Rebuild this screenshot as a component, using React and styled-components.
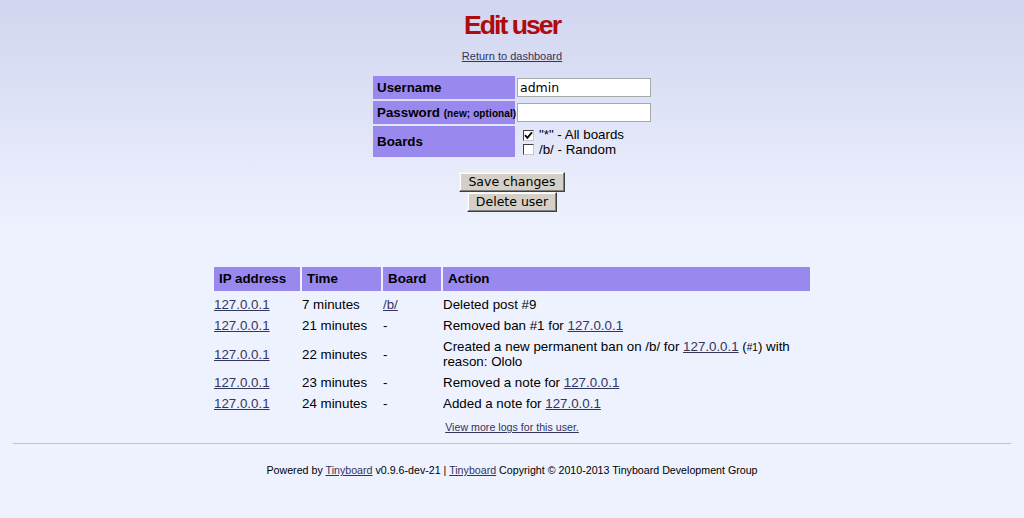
import React from "react";
import styled, { createGlobalStyle } from "styled-components";

const Global = createGlobalStyle`
  html, body { margin: 0; padding: 0; }
  body {
    background: #eef2ff linear-gradient(to bottom, #d1d5ef 0px, #eef2ff 230px) no-repeat;
    min-height: 518px;
    font-family: "Liberation Sans", Arial, sans-serif;
    font-size: 10pt;
    color: #000;
  }
`;

const Page = styled.div`
  padding: 0 13px;
`;

const Header = styled.header`
  text-align: center;
`;

const Title = styled.h1`
  margin: 10px 0 0;
  font-family: "Liberation Sans", Arial, sans-serif;
  font-size: 20pt;
  font-weight: bold;
  letter-spacing: -2px;
  color: #af0a0f;
  line-height: normal;
`;

const Subtitle = styled.p`
  margin: 9px 0 0;
  font-size: 11px;
  line-height: normal;
`;

const Link = styled.a`
  color: #34345c;
  text-decoration: underline;
  cursor: pointer;
`;

const FormTable = styled.table`
  margin: 12px auto 0;
  border-spacing: 2px;
  table-layout: fixed;
  width: 282px;
`;

const Th = styled.th`
  background: #98e;
  text-align: left;
  padding: 4px;
  white-space: nowrap;
  font-weight: bold;
  width: 134px;
  overflow: visible;
`;

const Small = styled.span`
  font-size: 10px;
  font-weight: bold;
  letter-spacing: 0.1px;
`;

const Td = styled.td`
  padding: 0;
  width: 134px;
  vertical-align: middle;
`;

const TextInput = styled.input`
  display: block;
  box-sizing: border-box;
  width: 134px;
  height: 19px;
  margin: 0;
  padding: 0 2px;
  border: 1px solid #a9a9a9;
  background: #fff;
  font-family: "DejaVu Sans", sans-serif;
  font-size: 12.5px;
  color: #000;
  outline: none;
`;

const BoardList = styled.div`
  display: flex;
  flex-direction: column;
  padding: 2px 0 0 6px;
`;

const BoardItem = styled.label`
  display: flex;
  align-items: center;
  gap: 5px;
  height: 14.5px;
  line-height: 14.5px;
  white-space: nowrap;
`;

const Box = styled.span`
  box-sizing: border-box;
  width: 11px;
  height: 11px;
  border-style: solid;
  border-width: 1px;
  border-color: #404040 #c8c8c8 #c8c8c8 #404040;
  background: #fff;
  display: flex;
  align-items: center;
  justify-content: center;
  flex: none;
`;

const Checkbox = ({ checked }) => (
  <Box>
    {checked && (
      <svg width="9" height="9" viewBox="0 0 9 9">
        <path d="M1 4.2 L3.4 6.8 L8 1.2" fill="none" stroke="#000" strokeWidth="1.8" />
      </svg>
    )}
  </Box>
);

const Buttons = styled.div`
  margin-top: 13px;
  display: flex;
  flex-direction: column;
  align-items: center;
`;

const Button = styled.button`
  box-sizing: border-box;
  height: 20px;
  margin: 0;
  padding: 0 8px;
  background: #d4d0c8;
  border-style: solid;
  border-width: 1px;
  border-color: #f4f4f4 #404040 #404040 #f4f4f4;
  box-shadow: inset -1px -1px 0 #808080, inset 1px 1px 0 #fff;
  font-family: "DejaVu Sans", sans-serif;
  font-size: 12.5px;
  line-height: 16px;
  color: #000;
`;

const LogTable = styled.table`
  margin: 53px auto 0;
  width: 600px;
  border-spacing: 2px;
  table-layout: fixed;
`;

const LogTh = styled.th`
  background: #98e;
  text-align: left;
  padding: 4px 15px 5px 5px;
  white-space: nowrap;
  font-weight: bold;
  width: ${(p) => p.$w}px;
`;

const LogTd = styled.td`
  text-align: left;
  padding: 4px 15px 0 0;
  vertical-align: middle;
  line-height: 15px;
  white-space: ${(p) => (p.$wrap ? "normal" : "nowrap")};
`;

const Tiny = styled.small`
  font-size: 10px;
  line-height: 1;
`;

const Unimportant = styled.p`
  margin: 8px 0 0;
  text-align: center;
  font-size: 8pt;
  line-height: normal;
`;

const Rule = styled.hr`
  border: none;
  border-top: 1px solid #b7c5d9;
  height: 0;
  margin: 10px 0 0;
`;

const Footer = styled.footer`
  margin-top: 20px;
  text-align: center;
  font-size: 8pt;
  line-height: normal;
`;

const logs = [
  { time: "7 minutes", board: "/b/", action: <>Deleted post #9</> },
  { time: "21 minutes", board: null, action: <>Removed ban #1 for <Link>127.0.0.1</Link></> },
  {
    time: "22 minutes",
    board: null,
    action: (
      <>
        Created a new permanent ban on /b/ for <Link>127.0.0.1</Link> (<Tiny>#1</Tiny>) with reason: Ololo
      </>
    ),
  },
  { time: "23 minutes", board: null, action: <>Removed a note for <Link>127.0.0.1</Link></> },
  { time: "24 minutes", board: null, action: <>Added a note for <Link>127.0.0.1</Link></> },
];

export default function App() {
  return (
    <Page>
      <Global />
      <Header>
        <Title>Edit user</Title>
        <Subtitle>
          <Link>Return to dashboard</Link>
        </Subtitle>
      </Header>

      <FormTable>
        <tbody>
          <tr>
            <Th>Username</Th>
            <Td>
              <TextInput defaultValue="admin" />
            </Td>
          </tr>
          <tr>
            <Th>
              Password <Small>(new; optional)</Small>
            </Th>
            <Td>
              <TextInput />
            </Td>
          </tr>
          <tr>
            <Th>Boards</Th>
            <Td>
              <BoardList>
                <BoardItem>
                  <Checkbox checked />
                  <span>"*" - All boards</span>
                </BoardItem>
                <BoardItem>
                  <Checkbox />
                  <span>/b/ - Random</span>
                </BoardItem>
              </BoardList>
            </Td>
          </tr>
        </tbody>
      </FormTable>

      <Buttons>
        <Button>Save changes</Button>
        <Button>Delete user</Button>
      </Buttons>

      <LogTable>
        <thead>
          <tr>
            <LogTh $w={66}>IP address</LogTh>
            <LogTh $w={59}>Time</LogTh>
            <LogTh $w={38}>Board</LogTh>
            <LogTh $w={347}>Action</LogTh>
          </tr>
        </thead>
        <tbody>
          {logs.map((l, i) => (
            <tr key={i}>
              <LogTd>
                <Link>127.0.0.1</Link>
              </LogTd>
              <LogTd>{l.time}</LogTd>
              <LogTd>{l.board ? <Link>{l.board}</Link> : "-"}</LogTd>
              <LogTd $wrap>{l.action}</LogTd>
            </tr>
          ))}
        </tbody>
      </LogTable>

      <Unimportant>
        <Link>View more logs for this user.</Link>
      </Unimportant>
      <Rule />
      <Footer>
        Powered by <Link>Tinyboard</Link> v0.9.6-dev-21 | <Link>Tinyboard</Link> Copyright © 2010-2013 Tinyboard Development Group
      </Footer>
    </Page>
  );
}
